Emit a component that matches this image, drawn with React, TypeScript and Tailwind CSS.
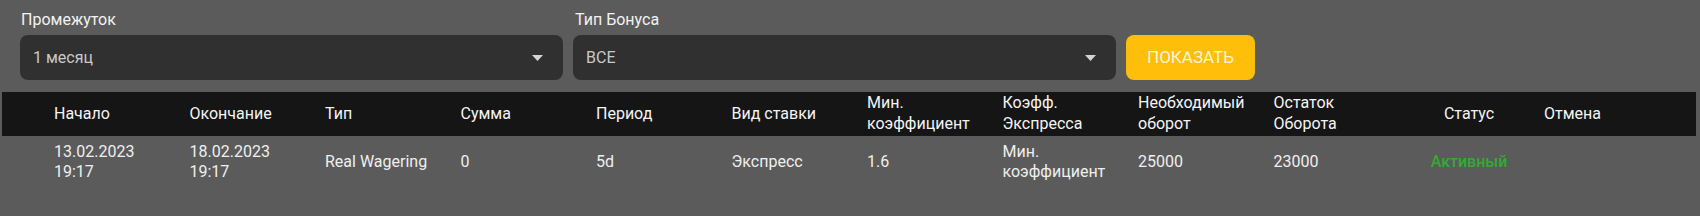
const columns = [
  'Начало',
  'Окончание',
  'Тип',
  'Сумма',
  'Период',
  'Вид ставки',
  'Мин. коэффициент',
  'Коэфф. Экспресса',
  'Необходимый оборот',
  'Остаток Оборота',
]

const row = [
  '13.02.2023 19:17',
  '18.02.2023 19:17',
  'Real Wagering',
  '0',
  '5d',
  'Экспресс',
  '1.6',
  'Мин. коэффициент',
  '25000',
  '23000',
]

function Select({ value }: { value: string }) {
  return (
    <div className="flex h-[45px] w-[543px] items-center justify-between rounded-[8px] bg-[#303030] pl-[13px] pr-[20px]">
      <span className="text-[16px] text-[#c9c9c9]">{value}</span>
      <svg width="11" height="6" viewBox="0 0 11 6" className="mt-[1px]">
        <path d="M0 0h11L5.5 6z" fill="#d4d4d4" />
      </svg>
    </div>
  )
}

export default function App() {
  return (
    <div className="h-[216px] w-[1700px] overflow-hidden bg-[#5b5b5b] font-['Roboto',sans-serif]">
      {/* Filters */}
      <div className="flex items-end gap-[10px] pl-[20px] pt-[8px]">
        <div className="flex flex-col gap-[3px]">
          <label className="pl-[1px] text-[16px] leading-[24px] text-[#f2f2f2]">Промежуток</label>
          <Select value="1 месяц" />
        </div>
        <div className="flex flex-col gap-[3px]">
          <label className="pl-[2px] text-[16px] leading-[24px] text-[#f2f2f2]">Тип Бонуса</label>
          <Select value="ВСЕ" />
        </div>
        <button className="h-[45px] w-[129px] rounded-[8px] bg-[#ffbe0a] text-[17px] text-[#fff6d6]">
          ПОКАЗАТЬ
        </button>
      </div>

      {/* Table */}
      <div className="ml-[2px] mt-[12px] w-[1694px]">
        <div className="flex h-[44px] items-center bg-[#151515] pl-[52px] text-[16px] leading-[20.7px] text-[#f4f4f4]">
          {columns.map((c) => (
            <div key={c} className="w-[135.5px] shrink-0 pr-[12px]">
              {c.includes(' ') && c !== 'Вид ставки' ? (
                <>
                  {c.split(' ')[0]}
                  <br />
                  {c.split(' ')[1]}
                </>
              ) : (
                c
              )}
            </div>
          ))}
          <div className="w-[120px] shrink-0 text-center">Статус</div>
          <div className="pl-[15px]">Отмена</div>
        </div>
        <div className="flex h-[51px] items-center pl-[52px] text-[16px] leading-[20px] text-[#efefef]">
          {row.map((c, i) => (
            <div key={i} className="w-[135.5px] shrink-0 pr-[12px]">
              {c.includes(' ') && c !== 'Real Wagering' ? (
                <>
                  {c.split(' ')[0]}
                  <br />
                  {c.split(' ')[1]}
                </>
              ) : (
                c
              )}
            </div>
          ))}
          <div className="w-[120px] shrink-0 text-center font-medium text-[#30ad30]">Активный</div>
          <div className="pl-[15px]" />
        </div>
      </div>
    </div>
  )
}
